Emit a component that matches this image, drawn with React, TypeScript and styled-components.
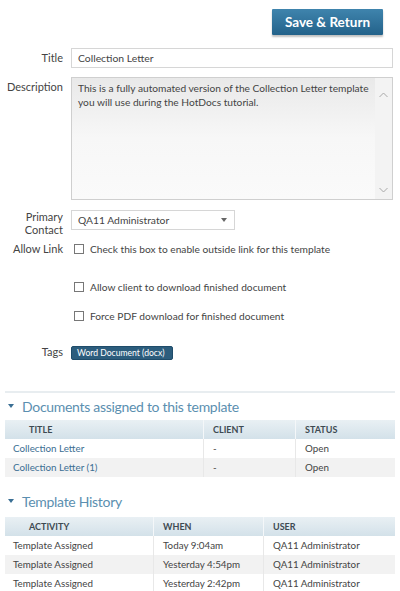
import React from "react";
import styled, { createGlobalStyle } from "styled-components";

const Global = createGlobalStyle`
  html, body { margin: 0; padding: 0; background: #fff; }
  body { font-family: "Lato", "Open Sans", sans-serif; color: #444; font-size: 11px; }
  * { box-sizing: border-box; }
`;

const Page = styled.div`
  width: 400px;
  padding: 9px 5px 0 5px;
`;

const TopBar = styled.div`
  display: flex;
  justify-content: flex-end;
  padding-right: 12px;
`;

const PrimaryButton = styled.button`
  width: 111px;
  height: 26px;
  border: none;
  border-radius: 1px;
  background: linear-gradient(#3f84ad, #23628a);
  color: #fff;
  font-family: "Lato", "Open Sans", sans-serif;
  font-weight: 700;
  font-size: 13.5px;
  box-shadow: 0 2px 2px rgba(0, 0, 0, 0.25);
  padding: 0;
`;

const Form = styled.div`
  display: grid;
  grid-template-columns: 58px 322px;
  column-gap: 8px;
  margin-top: 13px;
`;

const Label = styled.div<{ $top?: number }>`
  text-align: right;
  font-size: 11px;
  line-height: 13px;
  color: #444;
  padding-top: ${(p) => p.$top ?? 3}px;
`;

const Field = styled.div<{ $mb?: number }>`
  margin-bottom: ${(p) => p.$mb ?? 0}px;
`;

const TextInput = styled.div`
  height: 20px;
  border: 1px solid #d6d6d6;
  padding: 0 6px;
  line-height: 18px;
  font-size: 10.4px;
  color: #444;
`;

const TextArea = styled.div`
  height: 123px;
  border: 1px solid #cfcfcf;
  background: linear-gradient(#e9e9e9, #f7f7f7 60px, #fafafa);
  display: flex;
`;

const TextAreaText = styled.div`
  flex: 1;
  padding: 3px 6px;
  line-height: 14px;
  font-size: 10.2px;
  color: #444;
`;

const Scroll = styled.div`
  width: 17px;
  display: flex;
  flex-direction: column;
  justify-content: space-between;
  align-items: center;
  padding: 14px 0 6px;
  background: #f3f3f3;
`;

const Select = styled.div`
  width: 164px;
  height: 20px;
  border: 1px solid #d6d6d6;
  display: flex;
  align-items: center;
  justify-content: space-between;
  padding: 0 7px 0 6px;
  font-size: 10.3px;
  color: #444;
`;

const Caret = styled.span`
  width: 0;
  height: 0;
  border-left: 3px solid transparent;
  border-right: 3px solid transparent;
  border-top: 4px solid #666;
`;

const CheckRow = styled.label`
  display: flex;
  align-items: center;
  gap: 6px;
  height: 13px;
  margin-left: 3px;
  font-size: 10.2px;
  color: #444;
`;

const Box = styled.span`
  width: 10px;
  height: 10px;
  border: 1px solid #777;
  background: #fff;
  flex: none;
`;

const Tag = styled.span`
  display: inline-block;
  background: #2c5d7d;
  color: #fff;
  font-size: 8.6px;
  line-height: 12px;
  padding: 0 7px 0 5px;
  border-radius: 2px;
  border: 1px solid #1f4c6a;
`;

const Divider = styled.div`
  height: 2px;
  background: #e8edf0;
  margin-top: 31px;
`;

const SectionTitle = styled.div<{ $mt: number }>`
  display: flex;
  align-items: center;
  gap: 8px;
  margin-top: ${(p) => p.$mt}px;
  height: 20px;
  font-family: "Lato", sans-serif;
  font-size: 14px;
  letter-spacing: -0.3px;
  color: #5b8fb0;
  padding-left: 3px;
`;

const Arrow = styled.span`
  width: 0;
  height: 0;
  border-left: 3px solid transparent;
  border-right: 3px solid transparent;
  border-top: 4px solid #3a6f94;
`;

const Table = styled.div<{ $cols: string; $mt: number }>`
  display: grid;
  grid-template-columns: ${(p) => p.$cols};
  grid-auto-rows: 19px;
  margin-top: ${(p) => p.$mt}px;
`;

const Head = styled.div<{ $first?: boolean }>`
  height: 19px;
  line-height: 19px;
  background: linear-gradient(#e9f0f4, #d3e1e9);
  font-weight: 700;
  font-size: 9px;
  color: #3d4a52;
  padding-left: ${(p) => (p.$first ? 24 : 9)}px;
  border-left: ${(p) => (p.$first ? "none" : "1px solid #f4f7f9")};
  overflow: hidden;
`;

const Cell = styled.div<{ $alt?: boolean; $first?: boolean; $link?: boolean }>`
  height: 19px;
  line-height: 19px;
  background: ${(p) => (p.$alt ? "#f2f2f2" : "#fff")};
  font-size: 9.8px;
  color: ${(p) => (p.$link ? "#3b6e92" : "#444")};
  padding-left: ${(p) => (p.$first ? 8 : 9)}px;
  border-left: ${(p) => (p.$first ? "none" : "1px solid #e8e8e8")};
  white-space: nowrap;
  overflow: hidden;
`;

const docs = [
  ["Collection Letter", "-", "Open"],
  ["Collection Letter (1)", "-", "Open"],
];

const history = [
  ["Template Assigned", "Today 9:04am", "QA11 Administrator"],
  ["Template Assigned", "Yesterday 4:54pm", "QA11 Administrator"],
  ["Template Assigned", "Yesterday 2:42pm", "QA11 Administrator"],
];

const Chevron = ({ up }: { up?: boolean }) => (
  <svg width="9" height="6" viewBox="0 0 9 6">
    <path
      d={up ? "M0.5 5 L4.5 1 L8.5 5" : "M0.5 1 L4.5 5 L8.5 1"}
      fill="none"
      stroke="#a8a8a8"
      strokeWidth="1"
    />
  </svg>
);

export default function App() {
  return (
    <Page>
      <Global />
      <TopBar>
        <PrimaryButton>Save &amp; Return</PrimaryButton>
      </TopBar>
      <Form>
        <Label>Title</Label>
        <Field $mb={9}>
          <TextInput>Collection Letter</TextInput>
        </Field>
        <Label>Description</Label>
        <Field $mb={10}>
          <TextArea>
            <TextAreaText>
              This is a fully automated version of the Collection Letter template you will use during the HotDocs tutorial.
            </TextAreaText>
            <Scroll>
              <Chevron up />
              <Chevron />
            </Scroll>
          </TextArea>
        </Field>
        <Label $top={0}>
          Primary
          <br />
          Contact
        </Label>
        <Field $mb={12}>
          <Select>
            QA11 Administrator
            <Caret />
          </Select>
        </Field>
        <Label $top={0}>Allow Link</Label>
        <Field $mb={25}>
          <CheckRow>
            <Box />
            Check this box to enable outside link for this template
          </CheckRow>
        </Field>
        <div />
        <Field $mb={16}>
          <CheckRow>
            <Box />
            Allow client to download finished document
          </CheckRow>
        </Field>
        <div />
        <Field $mb={23}>
          <CheckRow>
            <Box />
            Force PDF download for finished document
          </CheckRow>
        </Field>
        <Label $top={0}>Tags</Label>
        <Field>
          <Tag>Word Document (docx)</Tag>
        </Field>
      </Form>
      <Divider />
      <SectionTitle $mt={3}>
        <Arrow />
        Documents assigned to this template
      </SectionTitle>
      <Table $cols="198px 92px 100px" $mt={4}>
        <Head $first>TITLE</Head>
        <Head>CLIENT</Head>
        <Head>STATUS</Head>
        {docs.map((r, i) => (
          <React.Fragment key={i}>
            <Cell $first $link $alt={i % 2 === 1}>{r[0]}</Cell>
            <Cell $alt={i % 2 === 1}>{r[1]}</Cell>
            <Cell $alt={i % 2 === 1}>{r[2]}</Cell>
          </React.Fragment>
        ))}
      </Table>
      <SectionTitle $mt={14}>
        <Arrow />
        Template History
      </SectionTitle>
      <Table $cols="148px 110px 132px" $mt={6}>
        <Head $first>ACTIVITY</Head>
        <Head>WHEN</Head>
        <Head>USER</Head>
        {history.map((r, i) => (
          <React.Fragment key={i}>
            <Cell $first $alt={i % 2 === 1}>{r[0]}</Cell>
            <Cell $alt={i % 2 === 1}>{r[1]}</Cell>
            <Cell $alt={i % 2 === 1}>{r[2]}</Cell>
          </React.Fragment>
        ))}
      </Table>
    </Page>
  );
}
